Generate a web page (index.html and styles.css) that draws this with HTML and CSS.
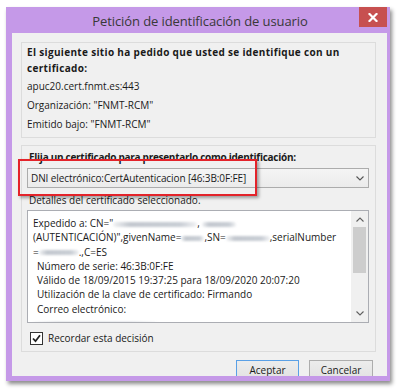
FILE: index.html
```html
<!DOCTYPE html>
<html lang="es">
<head>
<meta charset="utf-8">
<title>Petición de identificación de usuario</title>
<link rel="stylesheet" href="styles.css">
</head>
<body>
<div class="window">
  <div class="titlebar">
    <span class="title">Petición de identificación de usuario</span>
    <span class="close"><svg width="10" height="9" viewBox="0 0 10 9"><path d="M1.5 1 L8.5 8 M8.5 1 L1.5 8" stroke="#fff" stroke-width="2.2" stroke-linecap="square"/></svg></span>
  </div>
  <div class="content">
    <div class="group info">
      <p class="strong wide">El siguiente sitio ha pedido que usted se identifique con un certificado:</p>
      <p class="line">apuc20.cert.fnmt.es:443</p>
      <p class="line">Organización: "FNMT-RCM"</p>
      <p class="line">Emitido bajo: "FNMT-RCM"</p>
    </div>
    <div class="group choose">
      <p class="strong narrow">Elija un certificado para presentarlo como identificación:</p>
      <div class="select">
        <span>DNI electrónico:CertAutenticacion [46:3B:0F:FE]</span>
        <svg width="8" height="5" viewBox="0 0 8 5"><path d="M0.5 0.5 L4 4 L7.5 0.5" fill="none" stroke="#555" stroke-width="1.1"/></svg>
      </div>
      <p class="label">Detalles del certificado seleccionado.</p>
      <div class="details">
        <div class="detail-text">
          <div class="dl">Expedido a: CN="<span class="blur" style="width:84px"></span>, <span class="blur" style="width:34px"></span></div>
          <div class="dl">(AUTENTICACIÓN)",givenName=<span class="blur" style="width:23px"></span>,SN=<span class="blur" style="width:44px"></span>,serialNumber</div>
          <div class="dl">=<span class="blur" style="width:40px"></span>.,C=ES</div>
          <div class="dl ind">Número de serie: 46:3B:0F:FE</div>
          <div class="dl ind">Válido de 18/09/2015 19:37:25 para 18/09/2020 20:07:20</div>
          <div class="dl ind">Utilización de la clave de certificado: Firmando</div>
          <div class="dl ind">Correo electrónico:</div>
          <div class="dl"><span class="blur" style="width:124px"></span></div>
        </div>
        <div class="scrollbar">
          <svg class="arrow" width="8" height="5" viewBox="0 0 8 5"><path d="M0.5 4.5 L4 1 L7.5 4.5" fill="none" stroke="#606060" stroke-width="1.1"/></svg>
          <div class="track"><div class="thumb"></div></div>
          <svg class="arrow" width="8" height="5" viewBox="0 0 8 5"><path d="M0.5 0.5 L4 4 L7.5 0.5" fill="none" stroke="#606060" stroke-width="1.1"/></svg>
        </div>
      </div>
      <div class="check-row">
        <span class="checkbox"><svg width="9" height="9" viewBox="0 0 9 9"><path d="M1 4.5 L3.5 7.2 L8 1.3" fill="none" stroke="#222" stroke-width="1.8"/></svg></span>
        <span>Recordar esta decisión</span>
      </div>
    </div>
    <div class="buttons">
      <button class="btn default">Aceptar</button>
      <button class="btn">Cancelar</button>
    </div>
    <div class="highlight"></div>
  </div>
</div>
</body>
</html>
```

FILE: styles.css
```css
* { box-sizing: border-box; }
html, body { margin: 0; padding: 0; background: #fff; }
body {
  width: 400px;
  height: 390px;
  overflow: hidden;
  font-family: "Open Sans", "Noto Sans", sans-serif;
  font-size: 10px;
  color: #1a1a1a;
}
.window {
  margin: 7px 0 0 6px;
  width: 384px;
  height: 374px;
  background: #c599e8;
  border-left: 6px solid #c599e8;
  border-right: 3px solid #c599e8;
  border-bottom: 5px solid #c599e8;
  box-shadow: 2px 3px 4px rgba(0,0,0,0.45);
  display: flex;
  flex-direction: column;
}
.titlebar {
  height: 26px;
  flex: none;
  display: grid;
  grid-template-columns: 1fr auto 1fr;
  align-items: center;
}
.title {
  grid-column: 2;
  font-size: 13px;
  color: #383838;
  padding-top: 1px;
  margin-left: 1px;
  letter-spacing: -0.1px;
}
.close {
  grid-column: 3;
  justify-self: end;
  align-self: start;
  width: 28px;
  height: 20px;
  background: #c75050;
  display: flex;
  align-items: center;
  justify-content: center;
}
.content {
  flex: 1;
  background: #f0f0f0;
  padding: 9px 11px 0 9px;
  overflow: hidden;
  position: relative;
}
.group {
  border: 1px solid #dcdcdc;
  padding-left: 5px;
}
p { margin: 0; }
.strong { font-weight: 700; line-height: 16px; }
.wide { letter-spacing: 0.33px; }
.narrow { letter-spacing: -0.28px; }
.info { height: 96px; padding-top: 1px; }
.info .strong { margin-bottom: 1px; }
.line { line-height: 19px; }
.choose { margin-top: 7px; height: 207px; padding-top: 3px; padding-right: 6px; }
.choose .strong { padding-left: 2px; }
.select {
  margin-top: 3px;
  height: 20px;
  border: 1px solid #acacac;
  background: linear-gradient(#f4f4f4, #ebebeb);
  display: flex;
  align-items: center;
  justify-content: space-between;
  padding: 0 4px 0 3px;
}
.select span { letter-spacing: -0.1px; }
.label { padding-left: 2px; line-height: 16px; margin-top: 4px; }
.details {
  margin-top: 2px;
  height: 113px;
  border: 1px solid #abadb3;
  background: #fff;
  display: flex;
}
.detail-text { flex: 1; padding: 5px 0 0 5px; overflow: hidden; }
.dl { line-height: 14.25px; white-space: nowrap; height: 14.25px; }
.ind { padding-left: 4px; }
.blur {
  display: inline-block;
  height: 5px;
  vertical-align: middle;
  background: linear-gradient(90deg, rgba(190,196,204,0.2), #c3c8cf 20%, #c9ced5 80%, rgba(190,196,204,0.2));
  filter: blur(1px);
  border-radius: 3px;
}
.scrollbar {
  width: 17px;
  background: #f0f0f0;
  display: flex;
  flex-direction: column;
  align-items: center;
}
.arrow { flex: none; margin: 6px 0; }
.track { flex: 1; width: 100%; padding: 0 2px; }
.thumb { height: 46px; background: #cdcdcd; margin-top: -1px; }
.check-row {
  display: flex;
  align-items: center;
  gap: 5px;
  margin-top: 8px;
  padding-left: 3px;
  font-size: 10px;
}
.checkbox {
  width: 13px;
  height: 13px;
  border: 1px solid #333;
  background: #fff;
  display: flex;
  align-items: center;
  justify-content: center;
}
.buttons {
  display: flex;
  justify-content: flex-end;
  gap: 10px;
  margin-top: 8px;
  padding-right: 3px;
}
.btn {
  width: 64px;
  height: 16px;
  font-family: inherit;
  font-size: 10px;
  line-height: 13px;
  color: #1a1a1a;
  background: linear-gradient(#ececec, #e4e4e4);
  border: 1px solid #adadad;
  border-bottom: none;
  padding: 3px 0 0;
}
.btn.default { border-color: #5aa0e6; width: 63px; }
.highlight {
  position: absolute;
  left: 6px;
  top: 126px;
  width: 239px;
  height: 37px;
  border: 2.5px solid #e3232a;
  box-shadow: 2px 2px 3px rgba(0,0,0,0.35);
}
```
